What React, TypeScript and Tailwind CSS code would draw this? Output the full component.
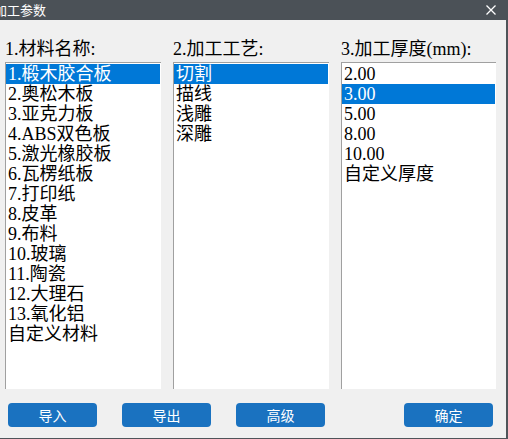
import { useState } from "react";

const materials = [
  "1.椴木胶合板",
  "2.奥松木板",
  "3.亚克力板",
  "4.ABS双色板",
  "5.激光橡胶板",
  "6.瓦楞纸板",
  "7.打印纸",
  "8.皮革",
  "9.布料",
  "10.玻璃",
  "11.陶瓷",
  "12.大理石",
  "13.氧化铝",
  "自定义材料",
];

const processes = ["切割", "描线", "浅雕", "深雕"];

const thicknesses = ["2.00", "3.00", "5.00", "8.00", "10.00", "自定义厚度"];

const serif = "font-['Liberation_Serif','Noto_Sans_CJK_SC',serif]";
const sans = "font-['Noto_Sans_CJK_SC','Liberation_Sans',sans-serif]";

interface ListProps {
  label: string;
  items: string[];
  selected: number;
  onSelect: (i: number) => void;
  width: string;
}

function ListColumn({ label, items, selected, onSelect, width }: ListProps) {
  return (
    <div className={`flex flex-col ${width}`}>
      <div className={`h-[25px] leading-[25px] text-[18px] text-black ${serif}`}>
        {label}
      </div>
      <div className="h-[327px] bg-white border-l border-t border-[#a0a0a0] pt-px pr-px">
        {items.map((item, i) => (
          <div
            key={item}
            onClick={() => onSelect(i)}
            className={`h-[20px] leading-[20px] pl-[2px] text-[18px] cursor-default whitespace-nowrap ${serif} ${
              i === selected ? "bg-[#0078d7] text-white" : "text-black"
            }`}
          >
            {item}
          </div>
        ))}
      </div>
    </div>
  );
}

function DialogButton({ children }: { children: string }) {
  return (
    <button
      className={`w-[89px] h-[24px] rounded-[4px] bg-[#1a72c0] text-white text-[14px] leading-[24px] ${sans}`}
    >
      {children}
    </button>
  );
}

export default function App() {
  const [material, setMaterial] = useState(0);
  const [process, setProcess] = useState(0);
  const [thickness, setThickness] = useState(1);

  return (
    <div className="w-[508px] h-[439px] flex flex-col bg-[#f0f0f0] overflow-hidden">
      {/* Title bar */}
      <div className="h-[20px] bg-[#4b5157] flex items-center justify-between shrink-0">
        <span className={`-ml-[6px] text-[13px] text-white leading-[20px] ${sans}`}>
          加工参数
        </span>
        <svg width="10" height="10" viewBox="0 0 10 10" className="mr-[12px] mb-[1px]">
          <path d="M0.5 0.5 L9.5 9.5 M9.5 0.5 L0.5 9.5" stroke="white" strokeWidth="1.3" />
        </svg>
      </div>

      {/* Body */}
      <div className="flex-1 flex flex-col border-r-2 border-b border-[#4f5459]">
        <div className="flex gap-[12px] pl-[5px] pt-[17px]">
          <ListColumn
            label="1.材料名称:"
            items={materials}
            selected={material}
            onSelect={setMaterial}
            width="w-[156px]"
          />
          <ListColumn
            label="2.加工工艺:"
            items={processes}
            selected={process}
            onSelect={setProcess}
            width="w-[156px]"
          />
          <ListColumn
            label="3.加工厚度(mm):"
            items={thicknesses}
            selected={thickness}
            onSelect={setThickness}
            width="w-[155px]"
          />
        </div>

        <div className="flex items-center gap-[25px] pl-[8px] pr-[13px] mt-[14px]">
          <DialogButton>导入</DialogButton>
          <DialogButton>导出</DialogButton>
          <DialogButton>高级</DialogButton>
          <div className="ml-auto">
            <DialogButton>确定</DialogButton>
          </div>
        </div>
      </div>
    </div>
  );
}
